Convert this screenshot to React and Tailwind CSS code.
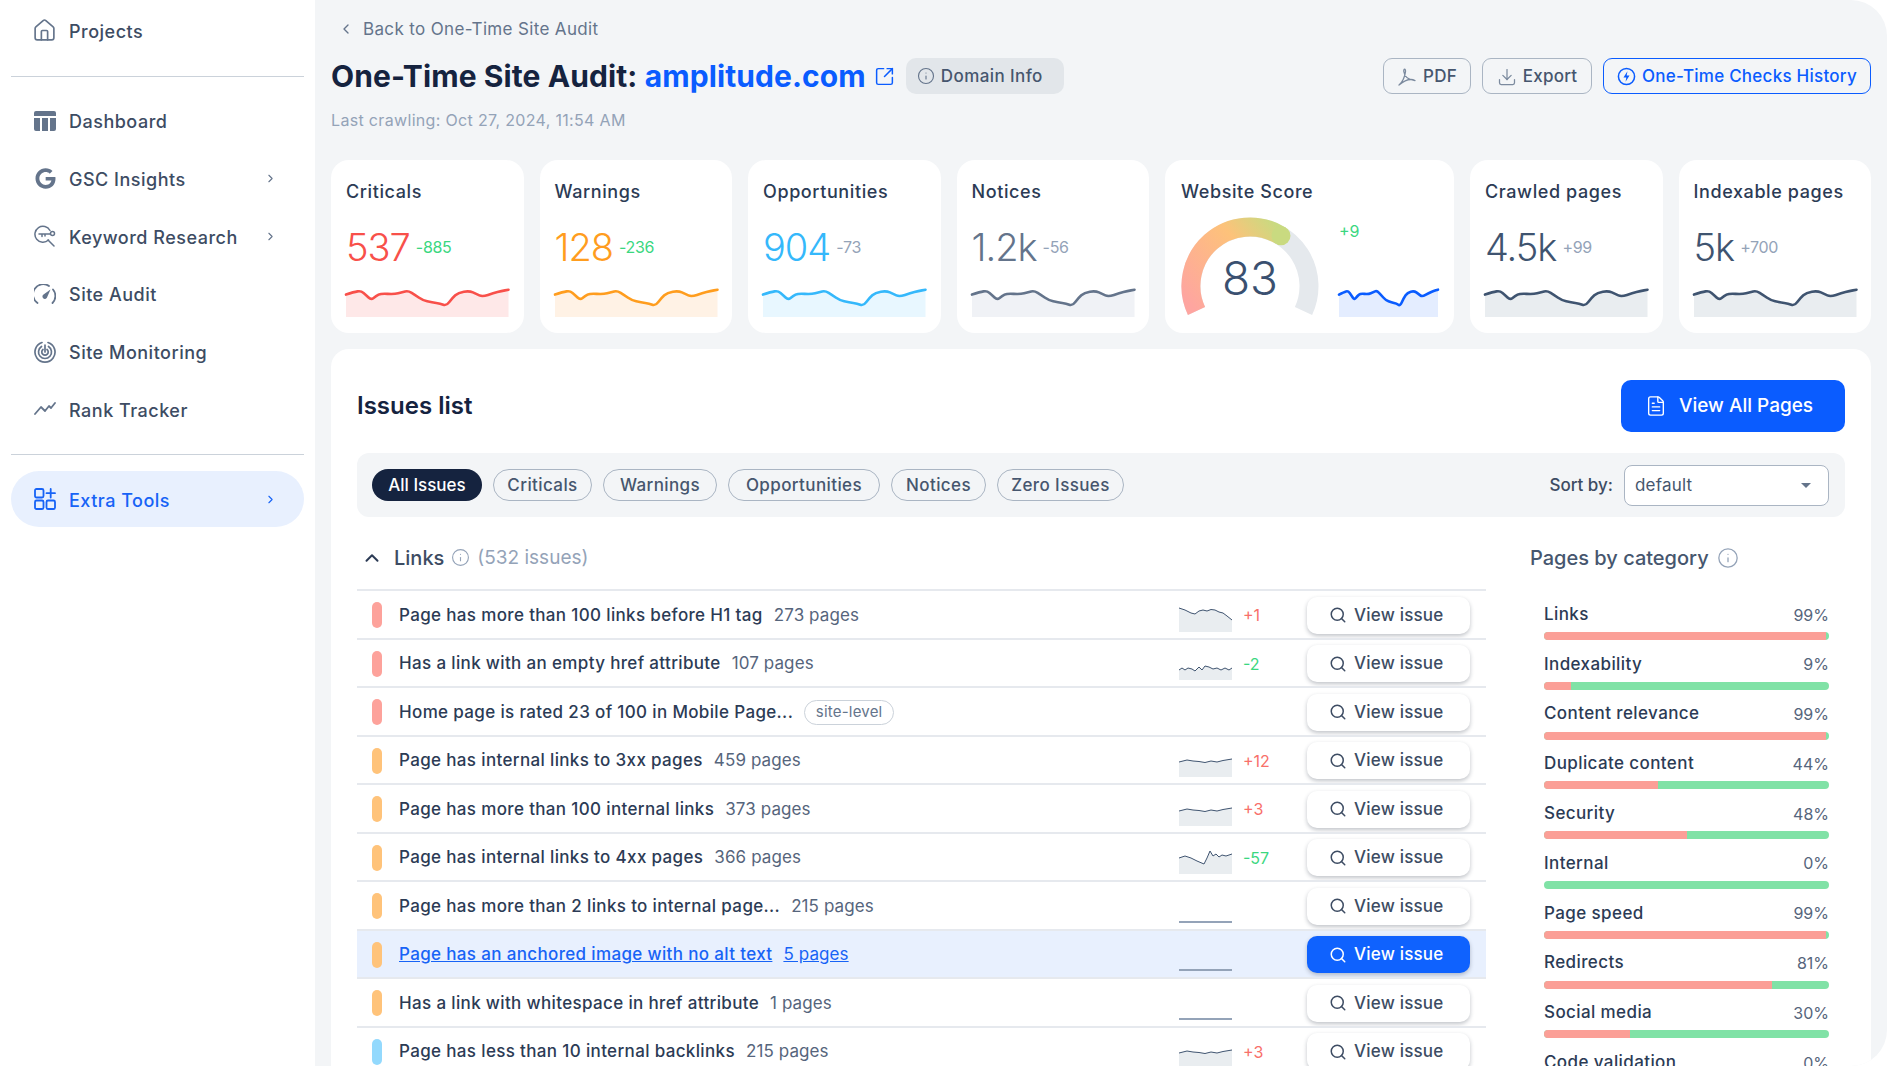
import { ChevronLeft, ChevronRight, ChevronUp, Download, FileText, House, Info, Search, SquareArrowOutUpRight } from 'lucide-react'
import { FaGoogle } from 'react-icons/fa'

// ─── Helpers ─────────────────────────────────────────────────
function linePath(pts) {
  return 'M' + pts.map((p) => p.join(' ')).join(' L')
}

function smoothPath(pts) {
  let d = `M${pts[0][0]} ${pts[0][1]}`
  for (let i = 1; i < pts.length - 1; i++) {
    const mx = (pts[i][0] + pts[i + 1][0]) / 2
    const my = (pts[i][1] + pts[i + 1][1]) / 2
    d += ` Q${pts[i][0]} ${pts[i][1]} ${mx} ${my}`
  }
  const last = pts[pts.length - 1]
  return `${d} L${last[0]} ${last[1]}`
}

const WAVE = [[0, 5.6], [8, 3], [15, 1.8], [20, 6], [25, 11], [30, 7], [35, 4.4], [48, 5.3], [56, 3.2], [62, 1.6], [69, 6], [76, 11], [86, 13.5], [94, 14.5], [100, 17], [106, 9], [112, 3.6], [123, 1.8], [130, 5], [136, 7.8], [147, 4], [155, 2], [162, 0.7]]

function Spark({ stroke, fill, className }) {
  const line = smoothPath(WAVE)
  return (
    <svg viewBox="0 0 162 28" preserveAspectRatio="none" className={className}>
      <path d={`${line} L162 28 L0 28 Z`} fill={fill} />
      <path d={line} fill="none" stroke={stroke} strokeWidth="2.6" strokeLinejoin="round" strokeLinecap="round" vectorEffect="non-scaling-stroke" />
    </svg>
  )
}

// ─── Sidebar ─────────────────────────────────────────────────
function DashboardIcon() {
  return (
    <svg viewBox="0 0 22 20" className="w-[22px] h-[20px]" fill="#64748b">
      <path d="M2 0h18a2 2 0 0 1 2 2v3H0V2a2 2 0 0 1 2-2z" />
      <path d="M0 7h6v13H2a2 2 0 0 1-2-2zM8 7h6v13H8zM16 7h6v11a2 2 0 0 1-2 2h-4z" />
    </svg>
  )
}

function KeywordIcon() {
  return (
    <svg viewBox="0 0 22 22" className="w-[22px] h-[22px]" fill="none" stroke="#64748b" strokeWidth="1.5" strokeLinecap="round">
      <path d="M16 5.5A8 8 0 1 0 14.5 15" />
      <path d="M14 15l6 6" />
      <path d="M5 9h11M8 9v2.5M11 9v2" />
      <circle cx="18.5" cy="8.5" r="2" />
    </svg>
  )
}

function AuditIcon() {
  return (
    <svg viewBox="0 0 22 20" className="w-[22px] h-[20px]" fill="none" stroke="#64748b" strokeWidth="1.8" strokeLinecap="round">
      <path d="M3.5 19A10 10 0 0 1 15 2" />
      <path d="M19 5.5A10 10 0 0 1 18.5 19" />
      <path d="M16.5 5.5l-7 5a2.4 2.4 0 1 0 3.4 3.2z" fill="#64748b" stroke="none" />
    </svg>
  )
}

function MonitorIcon() {
  return (
    <svg viewBox="0 0 22 22" className="w-[22px] h-[22px]" fill="none" stroke="#64748b" strokeWidth="1.7" strokeLinecap="round">
      <path d="M8 1.5A10 10 0 1 0 14 1.5" />
      <path d="M7.5 5.5A6.5 6.5 0 1 0 14.5 5.5" />
      <path d="M9 8.5A3.2 3.2 0 1 0 13 8.5" />
      <path d="M11 4v7" />
    </svg>
  )
}

function RankIcon() {
  return (
    <svg viewBox="0 0 22 14" className="w-[22px] h-[14px]" fill="none" stroke="#64748b" strokeWidth="1.8" strokeLinecap="round" strokeLinejoin="round">
      <path d="M1 12l6-7 4 4 4-5 2 2 4-5" />
    </svg>
  )
}

function ExtraIcon() {
  return (
    <svg viewBox="0 0 22 22" className="w-[22px] h-[22px]" fill="none" stroke="#1763f6" strokeWidth="1.8" strokeLinecap="round">
      <rect x="1" y="1" width="8.5" height="8.5" rx="1.5" />
      <rect x="1" y="12.5" width="8.5" height="8.5" rx="1.5" />
      <rect x="12.5" y="12.5" width="8.5" height="8.5" rx="1.5" />
      <path d="M16.7 1v8.5M12.5 5.2H21" />
    </svg>
  )
}

function NavItem({ icon, label, arrow }) {
  return (
    <div className="h-[57.700px] flex items-center pl-[34px] pr-[38px]">
      <span className="w-[22px] flex justify-center shrink-0">{icon}</span>
      <span className="ml-[13px] pt-[2px] text-[18px] font-medium text-[#3d4c63] tracking-[0.5px] flex-1">{label}</span>
      {arrow && <ChevronRight size={13} className="text-[#64748b]" />}
    </div>
  )
}

function Sidebar() {
  return (
    <aside className="w-[315px] shrink-0 bg-white px-[11px]">
      <div className="h-[77px] flex items-center pl-[21px] pb-[15px] border-b border-[#cbd2da]">
        <House size={25} strokeWidth={1.6} className="text-[#64748b]" />
        <span className="ml-[12px] pt-[1px] text-[18px] font-medium text-[#3d4c63] tracking-[0.5px]">Projects</span>
      </div>
      <div className="-mx-[11px] pt-[15px] pb-[16px]">
        <NavItem icon={<DashboardIcon />} label="Dashboard" />
        <NavItem icon={<FaGoogle size={21} color="#64748b" />} label="GSC Insights" arrow />
        <NavItem icon={<KeywordIcon />} label="Keyword Research" arrow />
        <NavItem icon={<AuditIcon />} label="Site Audit" />
        <NavItem icon={<MonitorIcon />} label="Site Monitoring" />
        <NavItem icon={<RankIcon />} label="Rank Tracker" />
      </div>
      <div className="border-t border-[#cbd2da] pt-[16px]">
        <div className="h-[56px] rounded-full bg-[#e8f0fe] flex items-center pl-[23px] pr-[27px]">
          <ExtraIcon />
          <span className="ml-[13px] pt-[2px] text-[18px] font-medium text-[#1763f6] tracking-[0.5px] flex-1">Extra Tools</span>
          <ChevronRight size={13} className="text-[#1763f6]" />
        </div>
      </div>
    </aside>
  )
}

// ─── Header ──────────────────────────────────────────────────
function PdfIcon() {
  return (
    <svg viewBox="0 0 20 20" className="w-[20px] h-[20px]" fill="none" stroke="#7b8a9e" strokeWidth="1.3" strokeLinejoin="round">
      <path d="M2 18c3-2 6-8 6.500-13.500C8.700 1.500 6.500 1.500 6.800 4.500 7.300 9 11 13 18 13.500 14 11.500 8 13 2 18z" />
    </svg>
  )
}

function BoltIcon() {
  return (
    <svg viewBox="0 0 20 20" className="w-[19px] h-[19px]" fill="none" stroke="#0a5cff" strokeWidth="1.6">
      <circle cx="10" cy="10" r="8.500" />
      <path d="M11 4.500L6.800 11h3L9 15.500 13.200 9h-3z" fill="#0a5cff" stroke="none" />
    </svg>
  )
}

function Header() {
  return (
    <div>
      <div className="h-[58px] flex items-start pt-[17px] pl-[7px] text-[#64748b] text-[17px] tracking-[0.35px]">
        <ChevronLeft size={16} className="mt-[4px]" />
        <span className="ml-[9px]">Back to One-Time Site Audit</span>
      </div>
      <div className="h-[36px] flex items-center">
        <h1 className="text-[30px] pt-[1px] font-bold text-[#15233f] tracking-[0.1px] whitespace-nowrap">
          One-Time Site Audit: <span className="text-[#0a5cff]">amplitude.com</span>
        </h1>
        <SquareArrowOutUpRight size={21} strokeWidth={1.7} className="ml-[8px] text-[#0a5cff]" />
        <div className="ml-[11px] h-[36px] w-[158px] rounded-[10px] bg-[#e2e6ea] flex items-center pl-[11px] text-[#46566e] text-[17px] font-medium tracking-[0.4px]">
          <Info size={18} strokeWidth={1.5} className="text-[#64748b]" />
          <span className="ml-[6px] pt-[1px]">Domain Info</span>
        </div>
        <div className="ml-auto flex gap-[11px] tracking-[0.25px]">
          <button className="h-[36px] w-[88px] pt-[1px] rounded-[9px] border border-[#aab5c3] flex items-center justify-center gap-[6px] text-[17px] font-medium text-[#46566e]">
            <PdfIcon />PDF
          </button>
          <button className="h-[36px] w-[110px] pt-[1px] rounded-[9px] border border-[#aab5c3] flex items-center justify-center gap-[6px] text-[17px] font-medium text-[#46566e]">
            <Download size={20} strokeWidth={1.5} className="text-[#7b8a9e]" />Export
          </button>
          <button className="h-[36px] w-[268px] pt-[1px] rounded-[9px] border-[1.5px] border-[#0a5cff] flex items-center justify-center gap-[6px] text-[17px] font-medium text-[#0a5cff] whitespace-nowrap">
            <BoltIcon />One-Time Checks History
          </button>
        </div>
      </div>
      <div className="mt-[15px] text-[16px] text-[#94a3b8] tracking-[0.33px] leading-[22px]">Last crawling: Oct 27, 2024, 11:54 AM</div>
    </div>
  )
}

// ─── Stat cards ──────────────────────────────────────────────
const LEFT_STATS = [
  { label: 'Criticals', value: '537', delta: '-885', color: 'text-[#f8504a]', deltaColor: 'text-[#3bd77f]', stroke: '#f8504a', fill: '#fee8e8' },
  { label: 'Warnings', value: '128', delta: '-236', color: 'text-[#ff9d1e]', deltaColor: 'text-[#3bd77f]', stroke: '#ff9d1e', fill: '#fff2e5' },
  { label: 'Opportunities', value: '904', delta: '-73', color: 'text-[#35b8fb]', deltaColor: 'text-[#94a3b8]', stroke: '#35b8fb', fill: '#e8f7ff' },
  { label: 'Notices', value: '1.2k', delta: '-56', color: 'text-[#64748b]', deltaColor: 'text-[#94a3b8]', stroke: '#64748b', fill: '#f0f2f6' },
]

const RIGHT_STATS = [
  { label: 'Crawled pages', value: '4.5k', delta: '+99', color: 'text-[#3f5470]', deltaColor: 'text-[#94a3b8]', stroke: '#3f5470', fill: '#e9edf0' },
  { label: 'Indexable pages', value: '5k', delta: '+700', color: 'text-[#3f5470]', deltaColor: 'text-[#94a3b8]', stroke: '#3f5470', fill: '#e9edf0' },
]

function StatCard({ label, value, delta, color, deltaColor, stroke, fill }) {
  return (
    <div className="flex-1 min-w-0 h-[173px] bg-white rounded-[18px] px-[15px] pt-[20px] pb-[16px] flex flex-col">
      <div className="text-[18px] font-medium leading-[24px] tracking-[0.6px] text-[#2c3b55]">{label}</div>
      <div className="mt-[21px] flex items-center h-[44px]">
        <span className={`text-[38px] font-light tracking-[-1px] ${color}`}>{value}</span>
        <span className={`ml-[6px] text-[16px] tracking-[-0.3px] ${deltaColor}`}>{delta}</span>
      </div>
      <Spark stroke={stroke} fill={fill} className="mt-auto w-full h-[28px] overflow-visible" />
    </div>
  )
}

function ScoreCard() {
  // gauge is a 230 degree arc, radius 59, centred on 69,69
  return (
    <div className="w-[289px] shrink-0 h-[173px] bg-white rounded-[18px] pl-[16px] pr-[16px] pt-[20px] pb-[16px] flex flex-col">
      <div className="text-[18px] font-medium leading-[24px] tracking-[0.6px] text-[#2c3b55]">Website Score</div>
      <div className="flex justify-between flex-1">
        <div className="relative w-[138px] h-[100px] mt-[13px]">
          <svg viewBox="0 0 138 100" className="w-[138px] h-[100px]" fill="none" strokeWidth="19">
            <defs>
              <linearGradient id="scoreGrad" gradientUnits="userSpaceOnUse" x1="15" y1="95" x2="105" y2="20">
                <stop offset="0" stopColor="#fea5a0" />
                <stop offset="0.65" stopColor="#fdc27a" />
                <stop offset="1" stopColor="#c9da80" />
              </linearGradient>
            </defs>
            <path d="M15.500 94A59 59 0 1 1 122.500 94" stroke="#e5e9ed" />
            <path d="M15.500 94A59 59 0 0 1 100 18.800" stroke="url(#scoreGrad)" />
            <circle cx="100" cy="18.800" r="9.500" fill="#c9da80" />
          </svg>
          <span className="absolute inset-x-0 top-[36px] text-center text-[46px] font-light leading-[50px] text-[#3a5070]">83</span>
        </div>
        <div className="w-[99px] flex flex-col">
          <span className="mt-[15px] text-[16px] text-[#3bd77f]">+9</span>
          <Spark stroke="#0a5cff" fill="#e4edff" className="mt-auto w-full h-[28px] overflow-visible" />
        </div>
      </div>
    </div>
  )
}

// ─── Issues ──────────────────────────────────────────────────
const FILTERS = [
  { label: 'Criticals', width: 'w-[99px]' },
  { label: 'Warnings', width: 'w-[114px]' },
  { label: 'Opportunities', width: 'w-[152px]' },
  { label: 'Notices', width: 'w-[95px]' },
  { label: 'Zero Issues', width: 'w-[127px]' },
]

const RED = 'bg-[#fda29b]'
const ORANGE = 'bg-[#ffc37a]'
const BLUE = 'bg-[#93d9fd]'

const CALM = [[0, 10], [8, 8], [14, 9], [20, 9.5], [26, 10.5], [32, 9], [38, 10], [44, 8.5], [53, 7]]

const ISSUES = [
  { color: RED, title: 'Page has more than 100 links before H1 tag', pages: '273 pages', delta: '+1', up: true, line: [[0, 1], [6, 3], [12, 6], [16, 7], [20, 4], [24, 3], [28, 4], [32, 2.5], [36, 3], [40, 5], [44, 6], [48, 9], [53, 13]] },
  { color: RED, title: 'Has a link with an empty href attribute', pages: '107 pages', delta: '-2', line: [[0, 15], [3, 13], [6, 15], [9, 13], [13, 14], [16, 16], [20, 12], [23, 15], [26, 11], [30, 12], [34, 14], [38, 13], [42, 15], [46, 13], [50, 15], [53, 13]] },
  { color: RED, title: 'Home page is rated 23 of 100 in Mobile Page...', badge: 'site-level' },
  { color: ORANGE, title: 'Page has internal links to 3xx pages', pages: '459 pages', delta: '+12', up: true, line: CALM },
  { color: ORANGE, title: 'Page has more than 100 internal links', pages: '373 pages', delta: '+3', up: true, line: CALM },
  { color: ORANGE, title: 'Page has internal links to 4xx pages', pages: '366 pages', delta: '-57', line: [[0, 9], [6, 7], [12, 9], [18, 12], [25, 15], [28, 9], [31, 2], [34, 7], [37, 5], [40, 8], [43, 6], [47, 7], [53, 5]] },
  { color: ORANGE, title: 'Page has more than 2 links to internal page...', pages: '215 pages', flat: true },
  { color: ORANGE, title: 'Page has an anchored image with no alt text', pages: '5 pages', flat: true, active: true },
  { color: ORANGE, title: 'Has a link with whitespace in href attribute', pages: '1 pages', flat: true },
  { color: BLUE, title: 'Page has less than 10 internal backlinks', pages: '215 pages', delta: '+3', up: true, line: CALM },
]

// label, shown value, red share of the bar
const CATEGORIES = [
  ['Links', 99, 99], ['Indexability', 9, 9.500], ['Content relevance', 99, 99], ['Duplicate content', 44, 40], ['Security', 48, 50],
  ['Internal', 0, 0], ['Page speed', 99, 99], ['Redirects', 81, 80], ['Social media', 30, 30], ['Code validation', 0, 0],
]

function MiniSpark({ line }) {
  const d = linePath(line)
  return (
    <svg viewBox="0 0 53 25" className="w-[53px] h-[25px] overflow-visible">
      <path d={`${d} L53 25 L0 25 Z`} fill="#e9edf0" />
      <path d={d} fill="none" stroke="#3f5470" strokeWidth="1" strokeLinejoin="round" />
    </svg>
  )
}

function ViewIssue({ active }) {
  return (
    <button
      className={`w-[163px] h-[37px] rounded-[10px] flex items-center pl-[22px] text-[17px] font-medium tracking-[0.2px] shadow-[0_2px_4px_rgba(30,41,59,0.28)] ${
        active ? 'bg-[#0f62fe] text-white' : 'bg-white text-[#3d4c63]'
      }`}
    >
      <Search size={18} strokeWidth={2} />
      <span className="ml-[7px]">View issue</span>
    </button>
  )
}

function IssueRow({ issue }) {
  const { color, title, pages, badge, delta, up, line, flat, active } = issue
  return (
    <div className={`h-[48.500px] flex items-center pt-[2px] border-t-2 border-[#e6e9ee] overflow-hidden ${active ? 'bg-[#e8f0fe]' : ''}`}>
      <span className={`ml-[15px] w-[10px] h-[26px] rounded-full shrink-0 ${color}`} />
      <div className={`ml-[17px] flex-1 min-w-0 flex items-center whitespace-nowrap text-[17px] ${active ? 'text-[#1763f6] underline' : 'text-[#2c3b55]'}`}>
        <span className="font-medium tracking-[0.35px]">{title}</span>
        {pages && <span className={`ml-[11px] tracking-[0.1px] ${active ? '' : 'text-[#56657c]'}`}>{pages}</span>}
        {badge && (
          <span className="ml-[11px] h-[25px] w-[90px] justify-center rounded-full border border-[#cbd2da] text-[15px] tracking-[0.2px] text-[#64748b] flex items-center">{badge}</span>
        )}
      </div>
      <div className="w-[53px] h-full flex items-end justify-center pb-[6px] shrink-0">
        {line && <MiniSpark line={line} />}
        {flat && <span className="w-[53px] h-[2px] bg-[#94a3b8]" />}
      </div>
      <span className={`ml-[11px] w-[64px] text-[16px] ${up ? 'text-[#f8706a]' : 'text-[#3bd77f]'}`}>{delta}</span>
      <div className="mr-[16px] shrink-0">
        <ViewIssue active={active} />
      </div>
    </div>
  )
}

function CategoryBar({ label, value, red }) {
  return (
    <div className="h-[49.800px]">
      <div className="flex justify-between items-center h-[24px] pt-[1px] text-[17px]">
        <span className="font-medium tracking-[0.4px] text-[#2c3b55]">{label}</span>
        <span className="text-[#56657c] text-[16px]">{value}%</span>
      </div>
      <div className="mt-[6px] h-[8px] rounded-full bg-[#80e2a6] overflow-hidden">
        <div className="h-full bg-[#fb9f97]" style={{ width: `${red}%` }} />
      </div>
    </div>
  )
}

function IssuesPanel() {
  return (
    <div className="mt-[16px] bg-white rounded-[18px] px-[26px] pt-[31px]">
      <div className="flex items-center justify-between h-[52px]">
        <h2 className="text-[24px] font-semibold text-[#15233f]">Issues list</h2>
        <button className="w-[224px] h-[52px] rounded-[10px] bg-[#0a5cff] text-white flex items-center pl-[24px] text-[19px] font-medium">
          <FileText size={22} strokeWidth={1.5} />
          <span className="ml-[12px]">View All Pages</span>
        </button>
      </div>

      <div className="mt-[21px] h-[64px] rounded-[12px] bg-[#f3f5f7] flex items-center pl-[15px] pr-[16px]">
        <div className="h-[32px] w-[110px] pt-[1px] rounded-full bg-[#15233f] text-white text-[17px] font-medium flex items-center justify-center">All Issues</div>
        {FILTERS.map((f) => (
          <div key={f.label} className={`ml-[11px] h-[32px] pt-[1px] justify-center rounded-full border border-[#aab5c3] text-[#46566e] text-[17px] font-medium tracking-[0.4px] flex items-center ${f.width}`}>{f.label}</div>
        ))}
        <span className="ml-auto pt-[1px] text-[17px] font-medium text-[#3d4c63]">Sort by:</span>
        <div className="ml-[11px] w-[205px] h-[41px] pt-[1px] rounded-[8px] border border-[#aab5c3] bg-white flex items-center justify-between pl-[10px] pr-[17px] text-[17px] tracking-[0.2px] text-[#46566e]">
          default
          <span className="w-0 h-0 border-x-[5px] border-x-transparent border-t-[5px] border-t-[#64748b]" />
        </div>
      </div>

      <div className="flex">
        <div className="w-[1129px] shrink-0">
          <div className="h-[72px] flex items-center pl-[4px] pt-[9px]">
            <ChevronUp size={22} strokeWidth={2.2} className="text-[#2c3b55]" />
            <span className="ml-[11px] text-[20px] font-medium text-[#3d4c63]">Links</span>
            <Info size={19} strokeWidth={1.4} className="ml-[7px] text-[#94a3b8]" />
            <span className="ml-[7px] pt-[2px] text-[19px] text-[#94a3b8]">(532 issues)</span>
          </div>
          {ISSUES.map((issue) => (
            <IssueRow key={issue.title} issue={issue} />
          ))}
        </div>
        <div className="flex-1 pl-[44px] pr-[16px]">
          <div className="h-[72px] flex items-center pt-[9px] text-[20px] font-medium text-[#46566e] whitespace-nowrap">
            Pages by category
            <Info size={22} strokeWidth={1.4} className="ml-[8px] text-[#94a3b8]" />
          </div>
          <div className="pl-[14px] pt-[13px]">
            {CATEGORIES.map(([label, value, red]) => (
              <CategoryBar key={label} label={label} value={value} red={red} />
            ))}
          </div>
        </div>
      </div>
    </div>
  )
}

// ─── Main page ───────────────────────────────────────────────
export default function App() {
  return (
    <div className="flex h-screen overflow-hidden bg-white [font-family:Inter,sans-serif]">
      <Sidebar />
      <main className="flex-1 min-w-0 bg-[#f3f5f7] rounded-r-[36px] overflow-hidden px-[16px]">
        <Header />
        <div className="mt-[29px] flex gap-[16px]">
          {LEFT_STATS.map((s) => (
            <StatCard key={s.label} {...s} />
          ))}
          <ScoreCard />
          {RIGHT_STATS.map((s) => (
            <StatCard key={s.label} {...s} />
          ))}
        </div>
        <IssuesPanel />
      </main>
    </div>
  )
}
